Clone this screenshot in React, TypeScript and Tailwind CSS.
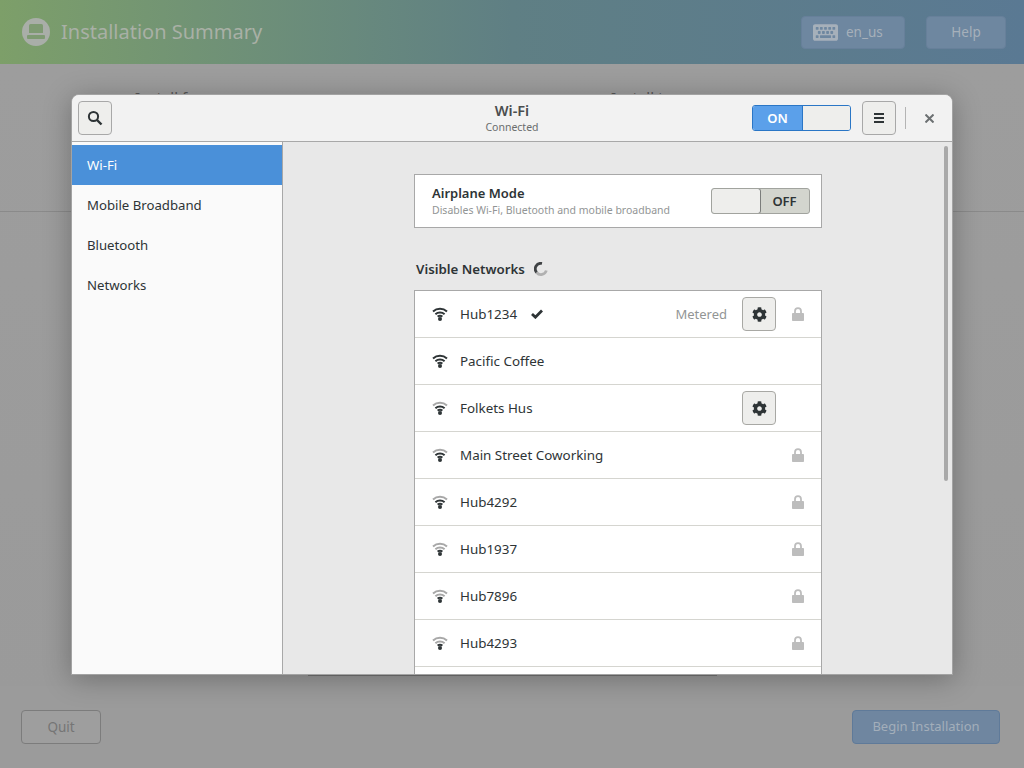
import React from 'react';
import { FaCog, FaKeyboard } from 'react-icons/fa';

const font = "font-['Noto_Sans','Open_Sans',sans-serif]";

const networks = [
  { name: 'Hub1234', level: 3, check: true, metered: true, gear: true, lock: true },
  { name: 'Pacific Coffee', level: 3 },
  { name: 'Folkets Hus', level: 2, gear: true },
  { name: 'Main Street Coworking', level: 2, lock: true },
  { name: 'Hub4292', level: 2, lock: true },
  { name: 'Hub1937', level: 1, lock: true },
  { name: 'Hub7896', level: 1, lock: true },
  { name: 'Hub4293', level: 1, lock: true },
];

const WifiIcon = ({ level }: { level: number }) => (
  <svg width="16" height="14" viewBox="0 0 16 14" fill="none" strokeWidth="2" strokeLinecap="butt">
    <path d="M1 4.4C5 0.8 11 0.8 15 4.4" stroke={level >= 3 ? '#2e3436' : '#a8a8a8'} />
    <path d="M3.4 7.2C6 5 10 5 12.6 7.2" stroke={level >= 2 ? '#2e3436' : '#a8a8a8'} />
    <path d="M5.6 9.6C7 8.6 9 8.6 10.4 9.6" stroke="#2e3436" />
    <circle cx="8" cy="12" r="2" fill="#2e3436" />
  </svg>
);

const LockIcon = () => (
  <svg width="12" height="14" viewBox="0 0 12 14" fill="none">
    <path d="M3 6.5V4.2a3 3 0 0 1 6 0v2.3" stroke="#bdbdbd" strokeWidth="1.8" />
    <rect x="0" y="6" width="12" height="8" rx="0.8" fill="#bdbdbd" />
  </svg>
);

const CheckIcon = () => (
  <svg width="12" height="10" viewBox="0 0 12 10">
    <path d="M1 5L4.4 8.2L11 1.6" fill="none" stroke="#2e3436" strokeWidth="2.8" />
  </svg>
);

const GearButton = () => (
  <button className="w-[34px] h-[34px] rounded-[4px] border border-[#a8a8a4] bg-[#eeeeec] flex items-center justify-center text-[#2e3436]">
    <FaCog size={15} />
  </button>
);

const NetworkRow = ({ net }: { net: (typeof networks)[number] }) => (
  <div className="h-[47px] flex items-center border-b border-[#d5d5d0] pl-[17px] pr-[16px] text-[13.4px] text-[#2e3436]">
    <WifiIcon level={net.level} />
    <span className="ml-[12px]">{net.name}</span>
    {net.check && <span className="ml-[14px] flex"><CheckIcon /></span>}
    <div className="flex-1" />
    {net.metered && <span className="text-[#929595] text-[13px] mr-[15px] pt-[2px]">Metered</span>}
    {net.gear && <GearButton />}
    <div className="w-[29px] flex justify-end items-center pr-[1px]">{net.lock && <LockIcon />}</div>
  </div>
);

const App = () => {
  return (
    <div className={`relative w-[1024px] h-[768px] overflow-hidden flex flex-col bg-[#9e9e9e] ${font}`}>
      {/* Installer behind the dialog */}
      <header className="h-[64px] shrink-0 flex items-center pl-[22px] pr-[18px] bg-gradient-to-r from-[#7d9f69] via-[#5f7f84] to-[#5a7993]">
        <div className="w-[28px] h-[28px] rounded-full bg-[#a9aea8] flex items-center justify-center">
          <svg width="18" height="16" viewBox="0 0 18 16">
            <path d="M2 1.5A1.5 1.5 0 0 1 3.5 0h11A1.5 1.5 0 0 1 16 1.5V9H2z" fill="#7e9a72" />
            <rect x="0" y="11" width="18" height="4" rx="1" fill="#7e9a72" />
          </svg>
        </div>
        <span className="ml-[11px] text-[20px] text-[#a9b0a6] leading-none">Installation Summary</span>
        <div className="flex-1" />
        <div className="w-[104px] h-[33px] rounded-[4px] bg-[#6e87a0] border border-[#67809a] flex items-center pl-[11px] text-[#a6b0ba] text-[13.5px]">
          <FaKeyboard size={25} />
          <span className="ml-[8px]">en_us</span>
        </div>
        <div className="ml-[21px] w-[80px] h-[33px] rounded-[4px] bg-[#6e87a0] border border-[#67809a] flex items-center justify-center text-[#a6b0ba] text-[13.5px]">
          Help
        </div>
      </header>

      <main className="flex-1 flex flex-col bg-gradient-to-b from-[#9d9d9d] to-[#9a9a9a]">
        <div className="h-[148px] shrink-0 border-b border-[#8a8a8a] flex pt-[22px] pl-[135px] text-[15px] text-[#555]">
          <span className="w-[476px]">Install from</span>
          <span>Install to</span>
        </div>
        <div className="flex-1 flex items-start justify-center pt-[463px]">
          <div className="w-[409px] border-b border-[#737373]" />
        </div>
      </main>

      <footer className="h-[82px] shrink-0 flex justify-between items-start pl-[21px] pr-[24px] bg-[#9b9b9b] pt-[4px] -mt-[4px]">
        <div className="w-[80px] h-[34px] rounded-[4px] border border-[#7c7c7c] bg-[#9e9e9e] flex items-center justify-center text-[13.5px] text-[#757575] mt-[20px]">Quit</div>
        <div className="w-[148px] h-[34px] rounded-[4px] border border-[#5f7a99] bg-[#6f86a0] flex items-center justify-center text-[13px] text-[#a3aeba] mt-[20px]">Begin Installation</div>
      </footer>

      {/* Wi-Fi dialog */}
      <div className="absolute left-[71px] top-[94px] w-[882px] h-[581px] rounded-t-[8px] bg-[#e8e8e8] border border-[#a3a3a3] overflow-hidden flex flex-col shadow-[0_4px_28px_rgba(0,0,0,0.28)]">
        <div className="h-[47px] shrink-0 bg-[#f2f2f2] border-b border-[#a8a8a8] grid grid-cols-[1fr_auto_1fr] items-center pl-[6px] pr-[18px]">
          <button className="w-[34px] h-[34px] rounded-[4px] border border-[#a8a8a8] bg-[#eeeeec] flex items-center justify-center">
            <svg width="16" height="16" viewBox="0 0 16 16" fill="none" stroke="#2e3436">
              <circle cx="6.5" cy="6.5" r="4.6" strokeWidth="2" />
              <path d="M10 10L14.5 14.5" strokeWidth="2.4" />
            </svg>
          </button>
          <div className="text-center leading-none ml-[12px]">
            <div className="text-[14.5px] font-semibold text-[#4a4d4e] leading-[16px]">Wi-Fi</div>
            <div className="text-[10.5px] text-[#6a6d6e] leading-[16px] translate-y-px">Connected</div>
          </div>
          <div className="flex items-center justify-end">
            <div className="w-[99px] h-[26px] rounded-[3px] border border-[#2a76c6] flex overflow-hidden">
              <div className="w-[50px] bg-[#5ba0ea] border-r border-[#2a76c6] flex items-center justify-center text-white text-[13px] font-semibold pt-[2px]">ON</div>
              <div className="flex-1 bg-[#eeeeec]" />
            </div>
            <button className="ml-[11px] w-[34px] h-[34px] rounded-[4px] border border-[#a8a8a8] bg-[#eeeeec] flex flex-col items-center justify-center gap-[2px]">
              <span className="w-[10px] h-[2px] bg-[#2e3436]" />
              <span className="w-[10px] h-[2px] bg-[#2e3436]" />
              <span className="w-[10px] h-[2px] bg-[#2e3436]" />
            </button>
            <div className="ml-[9px] w-px h-[22px] bg-[#b4b4b4]" />
            <svg className="ml-[19px]" width="9" height="9" viewBox="0 0 9 9" stroke="#6c7072" strokeWidth="2">
              <path d="M0.5 0.5L8.5 8.5M8.5 0.5L0.5 8.5" />
            </svg>
          </div>
        </div>

        <div className="flex-1 flex min-h-0">
          <aside className="w-[211px] shrink-0 bg-[#fafafa] border-r border-[#a8a8a8] pt-[3px] text-[13.2px] text-[#2e3436]">
            <div className="h-[40px] bg-[#4a90d9] text-white flex items-center pl-[15px] pt-[2px]">Wi-Fi</div>
            <div className="h-[40px] flex items-center pl-[15px] pt-[2px]">Mobile Broadband</div>
            <div className="h-[40px] flex items-center pl-[15px] pt-[2px]">Bluetooth</div>
            <div className="h-[40px] flex items-center pl-[15px] pt-[2px]">Networks</div>
          </aside>

          <section className="relative flex-1 overflow-hidden pt-[32px] pl-[131px]">
            <div className="absolute top-[4px] right-[4px] w-[4px] h-[335px] rounded-full bg-[#a9a9a9]" />
            <div className="w-[408px] h-[54px] bg-white border border-[#a8a8a8] flex items-center pl-[17px] pr-[11px]">
              <div className="flex-1 pb-[1px]">
                <div className="text-[13px] font-semibold text-[#2e3436] leading-[18px]">Airplane Mode</div>
                <div className="text-[10.5px] text-[#929595] leading-[15px] mt-[1px]">Disables Wi-Fi, Bluetooth and mobile broadband</div>
              </div>
              <div className="w-[99px] h-[26px] rounded-[3px] border border-[#a1a39e] flex overflow-hidden bg-[#d3d5ce]">
                <div className="w-[50px] bg-[#eeeeec] border border-[#7b7d7b] rounded-[3px] -m-px" />
                <div className="flex-1 flex items-center justify-center text-[13px] font-semibold text-[#2e3436] pt-[1px]">OFF</div>
              </div>
            </div>

            <div className="mt-[31px] h-[20px] pl-[2px] pt-[2px] flex items-center text-[13.3px] font-semibold text-[#2e3436]">
              Visible Networks
              <svg className="ml-[9px] -mt-[2px]" width="14" height="14" viewBox="0 0 14 14" fill="none" strokeWidth="2.8">
                <path d="M8 1.5A5.5 5.5 0 0 0 2.7 10.5" stroke="#3f4244" />
                <path d="M2.7 10.5A5.5 5.5 0 0 0 12.3 8.5" stroke="#b0b0b0" />
              </svg>
            </div>

            <div className="mt-[11px] w-[408px] bg-white border border-[#a8a8a8] pb-[40px]">
              {networks.map((net) => (
                <NetworkRow key={net.name} net={net} />
              ))}
            </div>
          </section>
        </div>
      </div>
    </div>
  );
};

export default App;
